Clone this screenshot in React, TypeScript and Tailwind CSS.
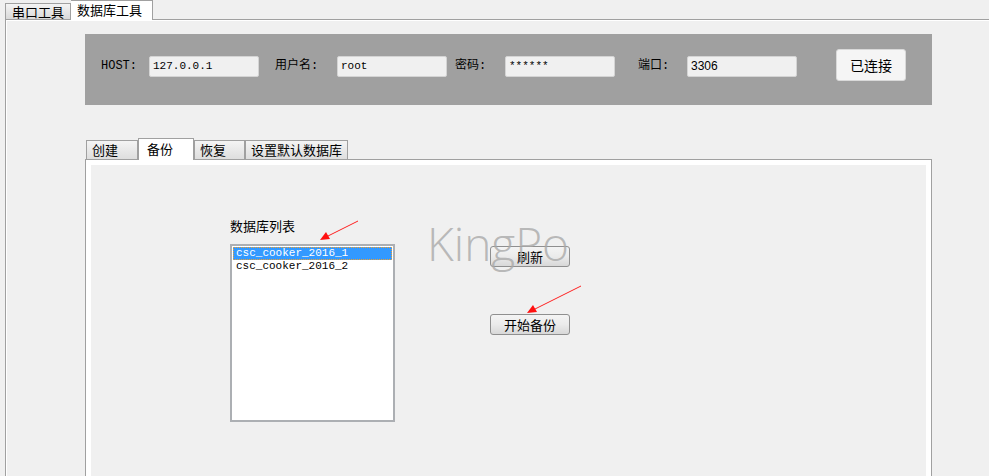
// Database tool window: connection bar + backup tab

const cjk = "font-['Noto_Sans_CJK_SC','Noto_Sans',sans-serif]";
const mono = "font-['Liberation_Mono','Noto_Sans_CJK_SC',monospace]";

function Field({ value, className }: { value: string; className: string }) {
  return (
    <div
      className={`mt-[7px] h-[21px] w-[110px] rounded-[2px] border border-[#d4d4d4] bg-[#f0f0f0] pl-[3px] leading-[19px] text-black ${className}`}
    >
      {value}
    </div>
  );
}

function Label({ text, w, className = "" }: { text: string; w: string; className?: string }) {
  return (
    <div className={`mt-[7px] h-[21px] leading-[21px] text-[12px] text-black ${mono} ${w} ${className}`}>
      {text}
    </div>
  );
}

function WinButton({ text }: { text: string }) {
  return (
    <div className="flex h-[21px] w-[80px] items-center justify-center rounded-[3px] border border-[#8f8f8f] bg-gradient-to-b from-[#f4f4f4] via-[#ebebeb] to-[#d8d8d8] text-[13px] leading-none text-black">
      {text}
    </div>
  );
}

function InnerTab({ text, active, w }: { text: string; active?: boolean; w: string }) {
  if (active) {
    return (
      <div
        className={`relative z-10 -mb-px h-[22px] ${w} border border-b-0 border-[#a0a0a0] bg-white pl-[8px] pt-[1px] text-[13px] leading-[18px]`}
      >
        {text}
      </div>
    );
  }
  return (
    <div
      className={`h-[19px] ${w} border border-b-0 border-[#a0a0a0] bg-gradient-to-b from-[#f4f4f4] to-[#dedede] pl-[5px] text-[13px] leading-[18px]`}
    >
      {text}
    </div>
  );
}

export default function App() {
  return (
    <div className={`relative h-[476px] w-[989px] overflow-hidden bg-[#f0f0f0] text-[12px] text-black ${cjk}`}>
      {/* window tabs */}
      <div className="flex h-[19px] items-end pl-[5px]">
        <div className="h-[16px] w-[66px] border border-b-0 border-[#a0a0a0] bg-gradient-to-b from-[#f4f4f4] to-[#d9d9d9] text-center text-[13px] leading-[15px]">
          串口工具
        </div>
        <div className="relative z-10 -mb-px h-[20px] w-[82px] border border-b-0 border-l-0 border-[#a0a0a0] bg-white pl-[6px] text-[13px] leading-[17px]">
          数据库工具
        </div>
      </div>

      <div className="ml-[5px] h-[460px] border-l border-t border-[#a0a0a0]">
        <div className="h-full border-l border-t border-white pl-[78px] pt-[13px]">
          {/* connection bar */}
          <div className="flex h-[71px] w-[847px] items-start bg-[#a0a0a0] pl-[16px] pt-[15px]">
            <Label text="HOST:" w="w-[48px]" className="text-[11px]" />
            <Field value="127.0.0.1" className={`${mono} text-[11px]`} />
            <Label text="用户名:" w="w-[62px]" className="ml-[16px]" />
            <Field value="root" className={`${mono} text-[11px]`} />
            <Label text="密码:" w="w-[50px]" className="ml-[8px]" />
            <Field value="******" className={`${mono} text-[11px]`} />
            <Label text="端口:" w="w-[49px]" className="ml-[23px]" />
            <Field value="3306" className="font-['Liberation_Sans',sans-serif] text-[12px]" />
            <div className="ml-[39px] flex h-[32px] w-[70px] items-center justify-center rounded-[3px] border border-[#d9d9d9] bg-[#f5f5f5] text-[14px]">
              已连接
            </div>
          </div>

          {/* backup tabs */}
          <div className="mt-[33px] flex items-end pl-[1px]">
            <InnerTab text="创建" w="w-[52px]" />
            <InnerTab text="备份" active w="w-[56px]" />
            <InnerTab text="恢复" w="w-[51px]" />
            <InnerTab text="设置默认数据库" w="w-[103px]" />
          </div>

          <div className="h-[330px] w-[847px] border border-b-0 border-[#a0a0a0]">
            <div className="flex h-full border-[5px] border-b-0 border-white bg-[#f0f0f0] pl-[139px]">
              <div className="pt-[53px]">
                <div className="h-[16px] text-[13px] leading-[16px]">数据库列表</div>
                <div className={`mt-[10px] h-[178px] w-[165px] border-2 border-[#acafb3] bg-white p-px text-[11px] ${mono}`}>
                  <div className="h-[13px] border border-dotted border-[#f0a030] bg-[#3399ff] pl-[2px] leading-[11px] text-white">
                    csc_cooker_2016_1
                  </div>
                  <div className="h-[13px] pl-[3px] leading-[13px]">csc_cooker_2016_2</div>
                </div>
              </div>
              <div className="ml-[95px] flex flex-col gap-[47px] pt-[81px]">
                <WinButton text="刷新" />
                <WinButton text="开始备份" />
              </div>
            </div>
          </div>
        </div>
      </div>

      {/* watermark */}
      <div className="pointer-events-none absolute left-[427px] top-[220px] font-['Open_Sans',sans-serif] text-[46px] font-light leading-none text-[#a9a9a9]/80">
        KingPo
      </div>

      {/* annotation arrows */}
      <svg className="pointer-events-none absolute left-0 top-0" width="989" height="476" viewBox="0 0 989 476">
        <line x1="358" y1="221" x2="326" y2="237" stroke="#ff2020" strokeWidth="1" />
        <polygon points="320,240 326,232 330,239" fill="#ff1010" />
        <line x1="581" y1="286" x2="533" y2="310" stroke="#ff2020" strokeWidth="1" />
        <polygon points="527,313 533,305 537,312" fill="#ff1010" />
      </svg>
    </div>
  );
}
